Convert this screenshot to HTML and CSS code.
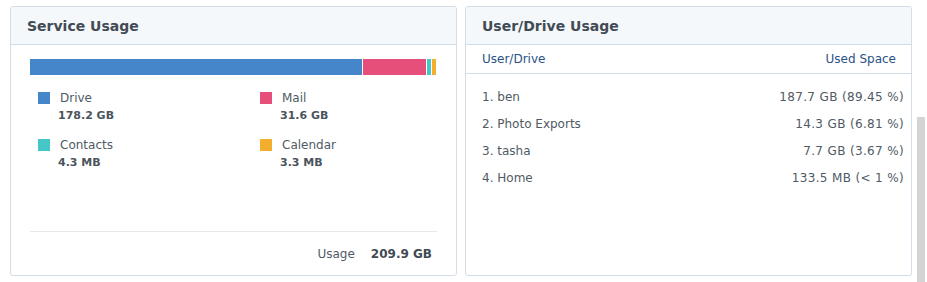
FILE: index.html
```html
<!DOCTYPE html>
<html>
<head>
<meta charset="utf-8">
<link rel="stylesheet" href="styles.css">
</head>
<body>
<div class="page">
  <section class="panel">
    <header class="panel-head">Service Usage</header>
    <div class="panel-body service">
      <div class="bar">
        <span class="seg drive" style="width:332px"></span>
        <span class="seg mail" style="width:63px"></span>
        <span class="seg contacts" style="width:4px"></span>
        <span class="seg calendar" style="width:4px"></span>
      </div>
      <div class="legend">
        <div class="item">
          <div class="label"><span class="sw drive"></span>Drive</div>
          <div class="value">178.2 GB</div>
        </div>
        <div class="item">
          <div class="label"><span class="sw mail"></span>Mail</div>
          <div class="value">31.6 GB</div>
        </div>
        <div class="item">
          <div class="label"><span class="sw contacts"></span>Contacts</div>
          <div class="value">4.3 MB</div>
        </div>
        <div class="item">
          <div class="label"><span class="sw calendar"></span>Calendar</div>
          <div class="value">3.3 MB</div>
        </div>
      </div>
      <div class="footer">
        <span class="usage-label">Usage</span>
        <span class="usage-value">209.9 GB</span>
      </div>
    </div>
  </section>
  <section class="panel">
    <header class="panel-head">User/Drive Usage</header>
    <div class="panel-body users">
      <div class="thead">
        <span>User/Drive</span>
        <span>Used Space</span>
      </div>
      <div class="tbody">
        <div class="row"><span>1. ben</span><span class="amount">187.7 GB (89.45 %)</span></div>
        <div class="row"><span>2. Photo Exports</span><span class="amount">14.3 GB (6.81 %)</span></div>
        <div class="row"><span>3. tasha</span><span class="amount">7.7 GB (3.67 %)</span></div>
        <div class="row"><span>4. Home</span><span class="amount">133.5 MB (&lt; 1 %)</span></div>
      </div>
    </div>
  </section>
</div>
<div class="scrollbar"></div>
</body>
</html>
```

FILE: styles.css
```css
html, body {
  margin: 0;
  padding: 0;
  background: #ffffff;
}
body {
  font-family: "DejaVu Sans", Verdana, sans-serif;
  font-size: 12px;
  color: #505a64;
}
.page {
  display: flex;
  gap: 8px;
  padding: 6px 0 0 10px;
}
.panel {
  width: 447px;
  height: 270px;
  box-sizing: border-box;
  border: 1px solid #d3dde7;
  border-radius: 3px;
  display: flex;
  flex-direction: column;
  overflow: hidden;
}
.panel-head {
  height: 37px;
  border-bottom: 1px solid #d3dde7;
  background: #f5f8fb;
  padding-left: 16px;
  font-size: 14px;
  font-weight: bold;
  color: #414b55;
  line-height: 39px;
}
.panel-body {
  flex: 1;
  display: flex;
  flex-direction: column;
}
.service {
  padding: 14px 19px 0 19px;
}
.bar {
  display: flex;
  gap: 1px;
  height: 16px;
}
.seg { display: block; height: 100%; }
.drive { background: #4586cb; }
.mail { background: #e64f79; }
.contacts { background: #45c7c8; }
.calendar { background: #f4ae2d; }
.legend {
  display: grid;
  grid-template-columns: 222px 1fr;
  row-gap: 14px;
  padding: 16px 0 0 8px;
}
.item {
  display: flex;
  flex-direction: column;
  gap: 3px;
}
.label {
  display: flex;
  align-items: center;
  gap: 10px;
  height: 14px;
  line-height: 14px;
  color: #505a64;
}
.sw {
  display: block;
  width: 12px;
  height: 12px;
}
.value {
  padding-left: 20px;
  font-size: 11px;
  font-weight: bold;
  color: #4b545d;
  height: 16px;
  line-height: 16px;
}
.footer {
  margin-top: auto;
  height: 43px;
  border-top: 1px solid #e4e9ee;
  display: flex;
  justify-content: flex-end;
  align-items: center;
  gap: 16px;
  padding-right: 5px;
}
.usage-label { color: #505a64; }
.usage-value { font-weight: bold; color: #414b55; }
.users { padding: 0; }
.thead {
  display: flex;
  justify-content: space-between;
  height: 28px;
  line-height: 28px;
  border-bottom: 1px solid #d3dde7;
  padding: 0 15px 0 16px;
  color: #2a5285;
}
.tbody {
  padding: 10px 7px 0 16px;
}
.row {
  display: flex;
  justify-content: space-between;
  height: 27px;
  line-height: 27px;
  color: #505a64;
}
.amount {
  letter-spacing: 0.35px;
}
.scrollbar {
  position: fixed;
  left: 917px;
  top: 117px;
  width: 8px;
  height: 165px;
  background: #d4d4d4;
}
```
